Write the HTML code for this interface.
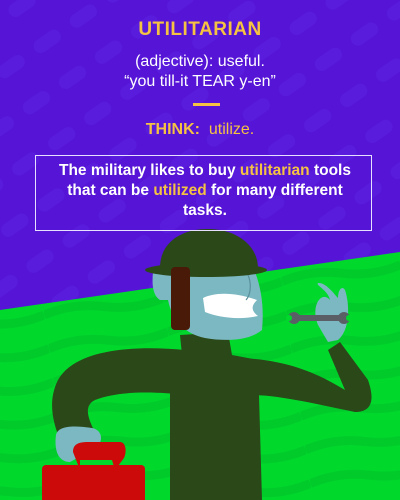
<!DOCTYPE html><html><head><style>
body{margin:0;width:400px;height:500px;overflow:hidden;font-family:"Liberation Sans",sans-serif}
.t{position:absolute;left:0;width:400px;text-align:center;color:#fff}
.y{color:#f5c242}
</style></head><body>
<svg width="400" height="500" style="position:absolute;left:0;top:0">
<defs><pattern id="p" width="44" height="44" patternUnits="userSpaceOnUse" patternTransform="rotate(-35)"><rect width="44" height="44" fill="#5514d6"/><rect x="0" y="10" width="30" height="14" rx="7" fill="#5a1cdc"/></pattern>
<pattern id="g" width="120" height="34" patternUnits="userSpaceOnUse" patternTransform="rotate(-8)"><rect width="120" height="34" fill="#00d92c"/><path d="M0 12 Q30 4 60 12 T120 12" stroke="#00cb2a" stroke-width="9" fill="none"/></pattern></defs>
<rect width="400" height="500" fill="url(#p)"/>
<polygon points="0,310 400,252 400,500 0,500" fill="url(#g)"/>
<!-- left arm -->
<path d="M185 350 C130 345 75 350 58 380 C48 400 52 420 60 440 L95 432 C86 415 85 405 95 400 C120 390 160 392 185 395Z" fill="#2b4818"/>
<!-- right arm -->
<path d="M240 358 C290 360 320 375 345 390 L328 350 L340 342 L368 380 C375 400 372 412 355 412 C320 405 280 395 250 395Z" fill="#2b4818"/>
<!-- torso -->
<path d="M180 335 L228 332 L232 355 L258 360 L262 500 L170 500 L170 360 L182 355Z" fill="#2b4818"/>
<!-- face -->
<path d="M153 272 L255 272 C262 290 264 310 262 330 C250 340 228 342 205 338 C185 334 172 320 168 300 L160 300 C152 295 152 282 153 272Z" fill="#7bb8c2"/>
<path d="M203 298 C215 292 235 292 257 300 C252 305 250 310 258 316 C240 320 220 318 205 312Z" fill="#fff"/>
<path d="M230 262 C250 262 255 290 246 300" stroke="#5a8f99" stroke-width="1.2" fill="none"/>
<!-- helmet -->
<path d="M160 268 C160 240 185 228 210 229 C240 230 258 248 258 268Z" fill="#2b4818"/>
<ellipse cx="206" cy="270" rx="61" ry="7" fill="#2b4818"/>
<rect x="171" y="267" width="19" height="63" rx="4" fill="#4a1a08"/>
<!-- right hand + wrench -->
<path d="M318 325 C310 305 322 290 330 300 C328 290 315 285 318 283 C326 282 335 295 338 298 C338 290 342 285 345 290 C350 305 350 330 338 340 L328 342Z" fill="#7bb8c2"/>
<rect x="292" y="315" width="52" height="6" fill="#5a5f66"/>
<circle cx="294" cy="318" r="6" fill="#5a5f66"/><circle cx="344" cy="318" r="6" fill="#5a5f66"/>
<circle cx="289" cy="318" r="3" fill="#00d92c"/><circle cx="349" cy="318" r="3" fill="#00d92c"/>
<!-- left hand + box -->
<path d="M56 435 C58 426 72 425 92 428 C104 430 104 445 92 450 L70 462 C58 462 54 450 56 435Z" fill="#7bb8c2"/>
<path d="M73 452 C73 443 80 442 90 442 L120 442 C126 442 127 452 124 458 L115 470 L112 460 L80 460 L80 470 Z" fill="#cc0a0a"/>
<rect x="42" y="465" width="103" height="40" rx="4" fill="#cc0a0a"/>
</svg>
<div class="t y" style="top:19px;font-size:19px;font-weight:bold;letter-spacing:0.5px">UTILITARIAN</div>
<div class="t" style="top:52px;font-size:16px;line-height:20px">(adjective): useful.<br>“you till-it TEAR y-en”</div>
<div style="position:absolute;left:193px;top:103px;width:27px;height:3px;background:#f5c242"></div>
<div class="t y" style="top:121px;font-size:16px;font-weight:bold">THINK: <span style="font-weight:normal">&nbsp;utilize.</span></div>
<div style="position:absolute;left:35px;top:155px;width:335px;height:74px;border:1.5px solid #e8e0ff"></div>
<div class="t" style="top:161px;font-size:15.5px;font-weight:bold;line-height:20px;left:50px;width:310px">The military likes to buy <span class="y">utilitarian</span> tools that can be <span class="y">utilized</span> for many different tasks.</div>
</body></html>
